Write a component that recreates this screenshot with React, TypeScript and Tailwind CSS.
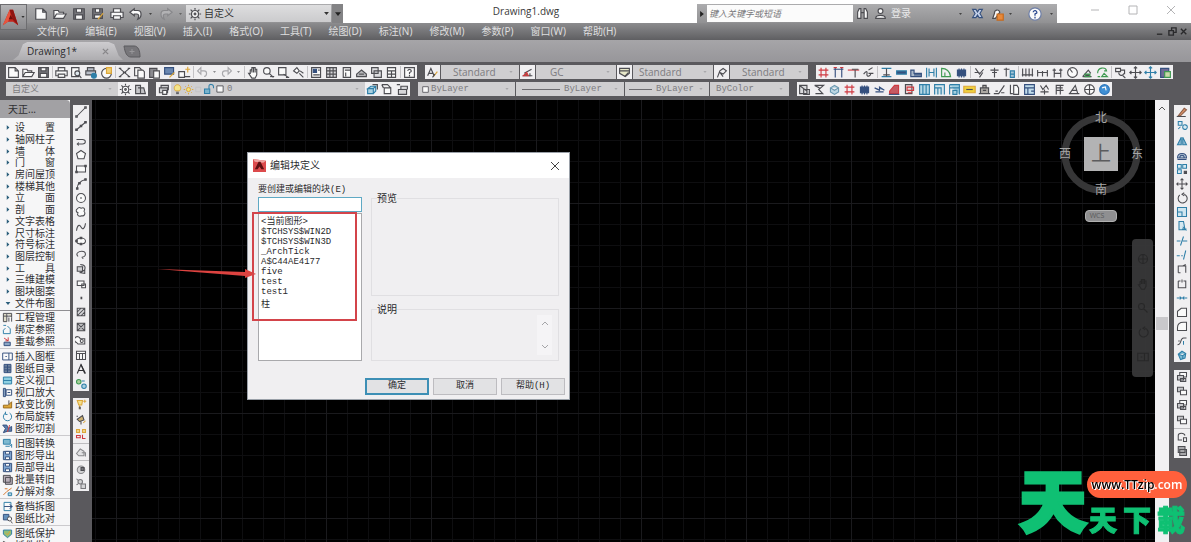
import React from "react";

type Stroke = [d: string, color: string, fill?: string];

const K = "#4d4d52";
const L = "#a9a9ad";
const B = "#2f7fa8";
const N = "#35507e";
const R = "#cf3a40";
const Y = "#dca63a";
const G = "#3f9a52";
const W = "#fafafa";

// All glyphs are drawn on a 16 x 16 grid
const GLYPHS: Record<string, Stroke[]> = {
  new: [["M2 2H10L14 6V14H2ZM10 2V6H14", K, W]],
  open: [["M1 13V4H6L7 6H12V8M1 13L4 8H15L12 13Z", K, W]],
  save: [["M2 2H14V14H2Z", K, "#77777c"], ["M5 2H11V6H5ZM4 9H12V14H4Z", K, W]],
  saveas: [["M2 2H13V13H2Z", K, "#77777c"], ["M5 2H10V6H5ZM4 9H11V13H4Z", K, W], ["M8 14L14 7", Y]],
  print: [["M4 6V2H12V6M1 6H15V12H1Z", K, W], ["M4 10H12V14H4Z", K, W]],
  preview: [["M2 2H11V13H2Z", K, W], ["M6 9A3 3 0 1 0 12 9A3 3 0 1 0 6 9M11 11L14 15", K, "#dfe8ee"]],
  publish: [["M3 6V2H11V6M1 6H13V11H1Z", K, "#b9bec8"], ["M8 12A3 3 0 1 0 14 12A3 3 0 1 0 8 12", B, B]],
  globe: [["M2 9A6 6 0 1 0 14 9A6 6 0 1 0 2 9", K, W], ["M8 9V2H14V9Z", Y, "#f0d077"]],
  cut: [["M2 3L14 13M14 3L2 13", K], ["M6 8H10", K], ["M1 3H4M12 3H15M1 13H4M12 13H15", K]],
  copy: [["M2 2H8L10 4V12H2Z", K, W], ["M6 5H12L14 7V15H6Z", K, W]],
  paste: [["M2 3H11V14H2Z", K, "#8b8b90"], ["M7 6H14V15H7Z", K, W]],
  match: [["M2 2H13V10H2Z", N, "#6a87b0"], ["M8 14L14 8", Y]],
  block: [["M1 7H8V14H1ZM8 13H15", K, W], ["M9 4H15M12 1V8", Y]],
  undo: [["M2 6L6 2V10ZM6 6H10C14 6 14 12 10 13", L]],
  redo: [["M14 6L10 2V10ZM10 6H6C2 6 2 12 6 13", L]],
  undoW: [["M1 6L6 2V4H10C15 4 15 12 10 14C12 10 11 8 9 8H6V10Z", K, W]],
  redoG: [["M15 6L10 2V4H6C1 4 1 12 6 14C4 10 5 8 7 8H10V10Z", "#88888b", "#b2b2b4"]],
  hand: [["M4 9V5L6 4V8V2H8V8V2H10V8V4H12V11L10 15H6L2 9Z", K, W]],
  zoom: [["M2 6A4 4 0 1 0 10 6A4 4 0 1 0 2 6M9 9L14 14", K, W], ["M10 13H15", K]],
  zoomwin: [["M2 2H11V11H2Z", K, W], ["M8 10L14 14M11 14H15", K]],
  zoomprev: [["M2 6L6 2L9 6L6 9Z", K, W], ["M9 9L14 14M10 6L14 9", K]],
  props: [["M2 2H13V14H2Z", K, W], ["M4 4H8V8H4Z", N, N], ["M10 5H12M4 11H12", K]],
  grid: [["M2 2H14V14H2Z", K, "#d6d6d9"], ["M2 6H14M2 10H14M6 2V14M10 2V14", K]],
  toolpal: [["M4 2H13V14H4Z", K, W], ["M6 5H13M7 8V13", K]],
  sheet: [["M2 10L8 5L14 10V13H2Z", K, "#b5b5b8"], ["M5 10H11", K]],
  markup: [["M2 2H10V9H2ZM5 6H14V14H5Z", K, "#dddde0"]],
  calc: [["M3 2H13V14H3ZM3 6H13M8 6V14M3 10H13", K, W]],
  help: [["M2 2H14V14H2Z", K, W], ["M6 6C6 3 11 4 10 7L8 8V10M8 11V13", K]],
  textA: [["M2 12L6 3L10 12M4 9H9", K], ["M9 13L14 7", Y], ["M8 14L11 10", K]],
  dim: [["M2 12H14M4 9L13 4M11 9V13", K], ["M3 12L7 8L9 12Z", R, "#8a5b45"]],
  table: [["M2 3H14V9L9 13L2 9Z", K, "#e6e6c8"], ["M2 6H14M8 13L13 8", K]],
  mleader: [["M3 14L6 6L10 3L14 6L10 10L6 8M6 8L10 13", K]],
  gear: [["M4 8A4 4 0 1 0 12 8A4 4 0 1 0 4 8", K, W], ["M7 8A1 1 0 1 0 9 8A1 1 0 1 0 7 8M8 1V3M8 13V15M1 8H3M13 8H15M3 3L5 5M11 11L13 13M3 13L5 11M11 5L13 3", K]],
  flyout: [["M2 3H8V13H2ZM5 6H12L14 13H6", K, "#c4c4c7"]],
  layers: [["M3 6H13V12H3ZM5 6V3H14V9", K, "#cccccf"], ["M7 14V9H12V14Z", K, W]],
  bulb: [["M5 10C1 5 5 1 8 1C11 1 15 5 11 10Z", Y, "#f4e58a"], ["M6 12H10M6 14H10", K]],
  sun: [["M5 8A3 3 0 1 0 11 8A3 3 0 1 0 5 8M8 1V3M8 13V15M1 8H3M13 8H15M3 3L4 4M12 12L13 13M3 13L4 12M12 4L13 3", Y, "#f3e27a"]],
  faint: [["M3 4H12V12H3Z", "#c0c0c2"]],
  lock: [["M2 8H9V14H2Z", B, "#78b2cc"], ["M8 8V4C8 1 14 1 14 5V7", B]],
  square: [["M3 3H13V13H3Z", K, W]],
  cubes: [["M2 7L6 4H12L9 7ZM2 7V13H9V7M9 13L12 10V4", B, "#a9cfdf"], ["M8 2H14V8", K]],
  layback: [["M4 6H12V13H4ZM1 2H8L12 6M1 2L3 6", K, W]],
  laystate: [["M3 8H13V14H3ZM6 8V4H14V8M1 2H5", K, "#d5d5d8"]],
  hash: [["M5 2V14M11 2V14M2 5H14M2 11H14", R]],
  axis: [["M2 4H14M4 2V14M12 2V14", N], ["M2 2H6M10 2H14", R]],
  wallaxis: [["M1 5H15", R], ["M6 4H14M10 5V14", K]],
  edit: [["M2 10C5 6 7 6 6 10C6 14 10 13 11 9M8 5L13 2M8 9H14", K]],
  ibeam: [["M2 3H14M2 13H14", B], ["M8 3V13M4 11H12", K]],
  bar: [["M2 6H14V10H2Z", B, N]],
  stairs: [["M1 13V5H5V9H14V13ZM5 11H14", N, "#a9b8c8"]],
  doorw: [["M2 2V14M14 2V14M5 3V13M11 3V13M5 8H11", B]],
  arcdoor: [["M2 13V3C8 3 12 7 13 13ZM6 13V8", G]],
  column: [["M3 5H13V12H3Z", N, N], ["M5 3V14M11 3V14M8 3V14", N]],
  pens: [["M3 3L8 10L13 4M2 8H8M8 14L12 8", K]],
  mark: [["M3 5H13M8 2V14M5 8H11", K]],
  markb: [["M1 4H8M4 2V13", K], ["M9 6H14V14H9ZM9 10H14", B, "#a8c6d8"]],
  dims: [["M2 3V13M6 3V13M10 3V13M14 3V13M1 11H15", K]],
  dimh: [["M2 5V13M14 5V13M2 8H14M8 6V13", K]],
  dimx: [["M2 5H6M10 5H14M4 3V14M12 3V14M4 9H12", K]],
  radius: [["M2 8A6 6 0 1 0 14 8A6 6 0 1 0 2 8M8 8L5 4", K, W]],
  angle: [["M2 13L9 5L12 9M2 13H13", K], ["M5 10H11V13H5Z", G, K]],
  refresh: [["M2 9C2 1 12 1 13 6L10 6M14 13L10 9L7 13ZM2 13H5", G]],
  find: [["M2 3H8V7H2ZM8 5H13V10M6 8A3 3 0 1 0 12 9", K], ["M11 12L14 15", K]],
  move: [["M8 1V15M1 8H15M6 3L8 1L10 3M6 13L8 15L10 13M3 6L1 8L3 10M13 6L15 8L13 10", K]],
  moveB: [["M8 1V15M1 8H15M6 3L8 1L10 3M6 13L8 15L10 13M3 6L1 8L3 10M13 6L15 8L13 10", B]],
  clip: [["M2 3H12V14H2Z", N, "#6f6a96"], ["M7 7H14V14H7Z", G, "#c9d8a8"]],
  pagebox: [["M2 3H11V13H2ZM2 3L11 10M7 8H14V14H7Z", K, "#dadadd"]],
  sigma: [["M2 3H13L7 8L12 13H3M2 3L8 6", K]],
  cloud: [["M3 6L8 3L13 6V11L8 14L3 11ZM3 6L8 9L13 6", "#6b98b0", "#bcd6e2"]],
  pump: [["M2 6L8 9V5L14 9M3 11H13", N, "#6b86a8"]],
  shoe: [["M2 13V10L8 3H13V13Z", R, "#c55a62"], ["M1 14H14", N]],
  redpage: [["M3 2H11V13H3Z", K, "#e9d5d7"], ["M5 5H13V9H5ZM6 12H11", R]],
  curtain: [["M2 2H14V14H2ZM6 2V14M10 2V14", B, "#b4d6e4"]],
  gate: [["M2 14V2H14V14M6 14V6H10V14M2 6H6", B, "#d5e5ec"]],
  window: [["M2 2H14V14M2 2V14M2 6H14M6 9H11V14H6Z", B, "#a3cfe0"]],
  ruler: [["M1 4H15V12H1Z", Y, "#f0cf3c"], ["M4 8H12", K]],
  robot: [["M3 6H13V13H3ZM6 6V3H10V6M6 9H10M1 13H15", K, "#ada9a4"]],
  slope: [["M1 13H7L14 3M3 10H6M10 12H14", K]],
  brace: [["M3 2V13H6M7 3H11L13 6V14H7Z", K, W]],
  calb: [["M2 2H14V14H2Z", N, "#c1dcea"], ["M2 6H14M6 6V14M10 10H14", N]],
  trees: [["M3 3L6 8L10 3L13 8M8 8V14M3 11H13", K]],
  flag: [["M4 14V3H13M4 6H12M4 9H13M9 3V14", K]],
  alpha: [["M2 13L9 3L12 13M5 9H11M1 13H14", K]],
  target: [["M2 8A6 6 0 1 0 14 8A6 6 0 1 0 2 8M8 2V14M2 8H14", K, W]],
  earth: [["M2 8A6 6 0 1 0 14 8A6 6 0 1 0 2 8", "#2f78bc", "#3f8fd4"], ["M5 6L9 5L10 9", W]],
  line: [["M2 14L14 2", K], ["M1 13H3V15H1ZM13 1H15V3H13Z", K]],
  xline: [["M2 13L14 3", K], ["M1 12H3V14H1ZM13 2H15V4H13ZM7 7H9V9H7Z", K, K]],
  pline: [["M2 6H10C15 6 15 12 10 12H3M5 10L3 12L5 14", K]],
  polygon: [["M8 2L14 6L12 13H4L2 6Z", K, W]],
  rect: [["M2 4H14V12H2Z", K, W], ["M1 11H3V13H1ZM13 3H15V5H13Z", K, K]],
  arc: [["M3 14C3 8 7 4 14 2", K], ["M2 13H4V15H2ZM13 1H15V3H13ZM5 6H7V8H5Z", K, K]],
  circle: [["M2 8A6 6 0 1 0 14 8A6 6 0 1 0 2 8M7 8H9M8 7V9", K, W]],
  revcloud: [["M3 4C5 1 7 2 8 3C12 1 14 4 12 7C15 10 12 14 9 13C5 15 2 12 4 9C1 8 1 5 3 4", K, W]],
  spline: [["M2 13C3 5 6 4 8 8C10 12 13 11 14 3", K]],
  ellipse: [["M2 8A6 4 0 1 0 14 8A6 4 0 1 0 2 8", K, W], ["M7 3H9V5H7ZM7 11H9V13H7ZM1 7H3V9H1Z", K, K]],
  ellarc: [["M4 10C0 6 5 3 9 3C15 3 16 10 9 11M9 11L11 13", K]],
  insblock: [["M3 5H10V11H3ZM7 2C14 2 14 6 13 9M7 13L13 9V14Z", K, "#d1d1d4"]],
  mkblock: [["M3 4H12V10H3ZM9 8H14V13H9Z", K, W]],
  point: [["M8 7H9V9H8Z", K, K]],
  hatch: [["M3 3H13V13H3ZM3 8L8 3M3 13L13 3M8 13L13 8", K, "#d5d5d8"]],
  gradient: [["M3 3H13V13H3ZM3 3L13 13M13 3L3 13", K, "#bcbcbf"]],
  region: [["M2 10A4 4 0 1 1 7 5H13V12H4Z", K, W], ["M7 8A2 2 0 1 0 11 8A2 2 0 1 0 7 8", K]],
  tabl: [["M2 3H14V14H2ZM2 6H14M6 6V14M10 6V14", K, W]],
  mtext: [["M3 14L8 2L13 14M5 10H11", "#2f2f33"], ["M8 2L14 14", "#2f2f33"]],
  addsel: [["M2 5A3 3 0 1 0 8 5A3 3 0 1 0 2 5", G, "#a8cf9a"], ["M9 11A3 3 0 1 0 15 11A3 3 0 1 0 9 11M9 4H13", B, "#a9cfdf"]],
  lampy: [["M3 2H10L9 8H5ZM6 9V13", Y, "#f4e08a"], ["M11 3H15M13 1V5", Y], ["M5 11H8M5 13H8", K]],
  lampk: [["M3 7L10 2L12 8L6 10ZM8 10V14M2 3H4", K, "#cdb070"], ["M11 12L14 9", Y]],
  nodes: [["M2 2H6V6H2ZM10 2H14V6H10Z", Y, "#f0d48a"], ["M2 10H7V13H2ZM10 9V14H14", R]],
  cloudg: [["M2 10L7 4L12 7V13H5ZM9 9H14V14", "#88888c", "#e2e2e4"]],
  ball: [["M3 9A5 5 0 1 0 13 9A5 5 0 1 0 3 9", "#88888c", "#d4d4d6"], ["M8 6H12V10H8Z", K, "#77777c"]],
  suns: [["M4 5A3 3 0 1 0 10 5A3 3 0 1 0 4 5M8 8H14V14H8ZM2 9L4 8M2 1L4 3", "#77777b", "#d4d4d6"]],
  erase: [["M3 13L11 3L14 5L6 13Z", "#8a5b45", "#d68f66"], ["M1 14H13", K]],
  copyo: [["M3 2H8V7H3ZM9 9A3 3 0 1 0 15 10A3 3 0 1 0 9 9M3 12L6 9", B, "#d8eaf2"]],
  mirror: [["M7 3V13H2ZM9 3V13H14Z", B, "#8fb9d2"]],
  offset: [["M2 12C2 4 14 4 14 12ZM5 12C5 7 11 7 11 12M2 14H14", N, "#b5c7d8"]],
  array: [["M2 2H7V7H2ZM9 2H14V7H9ZM2 9H7V14H2Z", B, "#d8eaf2"], ["M11 11H14V14H11Z", K, K]],
  rotate: [["M5 4A6 6 0 1 0 11 3M11 1L8 3L11 5", K]],
  scale: [["M2 2H14V14H2ZM2 8H8V14", B, "#cfe6f0"]],
  stretch: [["M4 2H10L12 13H4ZM9 9L14 14M8 12H14", B, "#d5e8f1"]],
  trim: [["M1 8H6M9 8H15M6 14L10 2", B]],
  extend: [["M1 9H5M7 9H9M10 14L13 2", B]],
  brk: [["M3 13V4H13V13M9 4L13 2M3 13H6", K]],
  brk2: [["M3 4H6M10 4H13V13H3V4M8 2V6", K]],
  join: [["M1 8H15M5 6L7 8L5 10M11 6L9 8L11 10", B]],
  chamfer: [["M2 14V7L7 3H14V14Z", K, W]],
  fillet: [["M2 14V10C2 5 5 3 10 3H14V14Z", K, W]],
  blend: [["M2 13C8 13 5 4 10 4H14M3 8H5", K], ["M10 8V13", B]],
  explode: [["M3 7L8 3L13 6L12 12L6 14ZM3 7L9 9L13 6M9 9V13", B, "#7dbad3"]],
  front: [["M5 2H14V8H5Z", K, W], ["M2 6H10V12H2ZM6 10H13V14H6Z", K, "#c7c7ca"]],
  back: [["M2 3H10V9H2Z", K, "#c7c7ca"], ["M6 7H14V13H6Z", K, W]],
  cyc: [["M3 6C3 2 11 2 12 6M3 6V12H8M10 9H14V14H10Z", K]],
  stack: [["M3 2H12V10H3ZM5 6H14V14H5Z", K, "#a8a8ab"]],
  project: [["M2 2H7V14H2ZM7 2H14V8M10 8V14M14 8V14M2 6H14", K, "#e0ddc9"]],
  bind: [["M2 9V14H12V7L8 3M2 9L5 6M2 2H6", B]],
  reload: [["M3 9H12V14H3Z", N, "#8aa6c5"], ["M3 3L9 7M9 2V7H5", R]],
  frame: [["M1 3H15V13H1ZM5 8H7M10 3V13", N, W]],
  catalog: [["M3 2H13V14H3Z", N, "#70839c"], ["M3 6H13M3 10H13M8 2V14", N]],
  view: [["M2 3H14V13H2Z", B, "#8fd0e2"], ["M2 8H14", B]],
  zoomv: [["M2 2H5V14H2Z", N, "#8aa6c5"], ["M6 4H14V12H6ZM8 8H12", N, W]],
  ratio: [["M2 9H9L14 4V13H2Z", "#9b6b1b", Y], ["M10 2V8", K]],
  turn: [["M11 3A6 6 0 1 1 5 3M5 1V5H8", B]],
  slice: [["M1 3H7L9 8L14 5V12H8L2 14L5 8Z", N, "#5b7fae"], ["M11 3L8 13", R]],
  convert: [["M2 2H12V9H2Z", B, "#7fb9d0"], ["M5 12H11L14 9V14", B]],
  disk: [["M2 2H14V14H2Z", N, "#7fa6d2"], ["M5 2H11V6H5ZM5 10H11V14H5Z", N, W]],
  batch: [["M2 2H12V12H2ZM5 5H15V15H5Z", K, "#b9aeb8"]],
  split: [["M2 13L7 8L14 3M8 4H4", "#d2762e"], ["M9 10H14V14H9Z", B, "#b4d6e4"]],
  archive: [["M3 2H13V14H3Z", B, W], ["M3 8H15M11 5L15 8L11 11", N]],
  compare: [["M2 2H10V10H2Z", N, "#6490bb"], ["M8 8A3 3 0 1 0 14 9A3 3 0 1 0 8 8M13 12L15 15", K, W]],
  protect: [["M2 3H14V9L8 14L2 9Z", B, "#8fbf7a"], ["M5 7L8 10L12 4", Y]],
  plugin: [["M2 2L14 8L8 9L6 14Z", K, "#8a8a55"]],
  binoc: [["M2 14V6L4 2H6V14ZM10 14V2H12L14 6V14ZM6 7H10", K, W]],
  person: [["M5 5A3 3 0 1 0 11 5A3 3 0 1 0 5 5M2 14C2 9 14 9 14 14Z", K, W]],
  exchange: [["M2 3H6L8 6L10 3H14L11 8L14 13H10L8 10L6 13H2L5 8Z", N, "#c5d1e8"]],
  a360: [["M4 7A3 3 0 1 1 10 6L5 13H2Z", K, W], ["M7 8H14V15H7Z", "#c56a1d", "#e8893a"]],
  qmark: [["M1 8A7 7 0 1 0 15 8A7 7 0 1 0 1 8", "#6e7fa8", W], ["M6 6C6 3 11 4 10 7L8 8V10M8 11V13", "#27458f"]],
};

const Glyph = ({ name, className = "size-[13px]" }: { name: string; className?: string }) => (
  <svg viewBox="0 0 16 16" className={`${className} shrink-0`} strokeWidth={1.4} aria-hidden="true">
    {GLYPHS[name].map(([d, color, fill], i) => (
      <path key={i} d={d} stroke={color} fill={fill ?? "none"} />
    ))}
  </svg>
);

const Caret = ({ className }: { className: string }) => (
  <svg viewBox="0 0 8 5" className={`pointer-events-none shrink-0 ${className}`} aria-hidden="true">
    <path d="M0 0H8L4 5Z" fill="currentColor" />
  </svg>
);

// "|" is a separator and "." the small arrow beside undo / redo
function ToolStrip({ items }: { items: string }) {
  return (
    <div className="flex h-full items-center bg-[#f0eff1]">
      {items.split(" ").map((name, i) => {
        if (name === "|") return <span key={i} className="mx-px h-3 w-px bg-[#c3c2c5]" />;
        if (name === ".")
          return (
            <span key={i} className="flex w-[9px] justify-center">
              <Caret className="h-[2px] w-[3px] text-[#8d8d90]" />
            </span>
          );
        return (
          <button key={i} type="button" aria-label={name} className="flex h-full w-[15px] items-center justify-center">
            <Glyph name={name} />
          </button>
        );
      })}
    </div>
  );
}

function VerticalStrip({ items, className }: { items: string; className: string }) {
  return (
    <div className={`flex w-full flex-col bg-[#f0eff1] ${className}`}>
      {items.split(" ").map((name, i) =>
        name === "|" ? (
          <span key={i} className="my-px h-px bg-[#bdbcbf]" />
        ) : (
          <button key={i} type="button" aria-label={name} className="flex min-h-0 flex-1 items-center justify-center">
            <Glyph name={name} className="size-[12px]" />
          </button>
        )
      )}
    </div>
  );
}

function Combo({ label, value, className, children }: { label: string; value: string; className: string; children?: React.ReactNode }) {
  return (
    <label className={`flex h-full items-center bg-[#cfced0] pr-1.5 text-[#7d7c80] ${className}`}>
      {children}
      <select aria-label={label} className="h-full min-w-0 flex-1 appearance-none bg-transparent leading-[14px] outline-none">
        <option>{value}</option>
      </select>
      <Caret className="h-[2px] w-1 text-[#aaa9ac]" />
    </label>
  );
}

const MENUS = ["文件(F)", "编辑(E)", "视图(V)", "插入(I)", "格式(O)", "工具(T)", "绘图(D)", "标注(N)", "修改(M)", "参数(P)", "窗口(W)", "帮助(H)"];

const CATEGORIES = [
  "设　　置", "轴网柱子", "墙　　体", "门　　窗", "房间屋顶", "楼梯其他", "立　　面", "剖　　面",
  "文字表格", "尺寸标注", "符号标注", "图层控制", "工　　具", "三维建模", "图块图案", "文件布图",
];

const COMMANDS: [string, string][][] = [
  [["project", "工程管理"], ["bind", "绑定参照"], ["reload", "重载参照"]],
  [
    ["frame", "插入图框"], ["catalog", "图纸目录"], ["view", "定义视口"], ["zoomv", "视口放大"],
    ["ratio", "改变比例"], ["turn", "布局旋转"], ["slice", "图形切割"],
  ],
  [["convert", "旧图转换"], ["disk", "图形导出"], ["disk", "局部导出"], ["batch", "批量转旧"], ["split", "分解对象"]],
  [["archive", "备档拆图"], ["compare", "图纸比对"]],
  [["protect", "图纸保护"], ["plugin", "插件发布"]],
];

const BLOCKS = ["<当前图形>", "$TCHSYS$WIN2D", "$TCHSYS$WIN3D", "_ArchTick", "A$C44AE4177", "five", "test", "test1", "柱"];

const AutocadLogo = ({ className }: { className: string }) => (
  <svg viewBox="0 0 20 20" className={className} aria-hidden="true">
    <path d="M1 19L9 1H13L19 19L13 15H7Z" fill="#c4261d" />
    <path d="M9 1L13 1L19 19L13 13Z" fill="#8e1512" />
    <path d="M1 19L9 1L10 9L7 15Z" fill="#e8553f" />
    <path d="M8 12L10 7L13 12Z" fill="#6e0f0d" />
  </svg>
);

const DialogLogo = () => (
  <svg viewBox="0 0 14 14" className="size-[13px]" aria-hidden="true">
    <path d="M0 0L14 2V14H0Z" fill="#dc4a4c" />
    <path d="M0 0L14 2L11 4L2 3Z" fill="#f0a5a2" />
    <path d="M2 11L6 3H8L12 11H9L7 8L5 11Z" fill="#5e0f12" />
  </svg>
);

function TitleBar() {
  return (
    <header className="flex h-[23px] shrink-0 items-end bg-white">
      <div className="flex h-[19px] items-center bg-gradient-to-b from-[#acacae] to-[#919193] pl-[31px]">
        {["new", "open", "save", "saveas", "print", "undoW"].map((name) => (
          <button key={name} type="button" aria-label={name} className="flex w-[19px] justify-center">
            <Glyph name={name} className="size-[14px]" />
          </button>
        ))}
        <Caret className="mx-1 h-[2px] w-[3px] text-[#444]" />
        <button type="button" aria-label="redo" className="flex w-[19px] justify-center">
          <Glyph name="redoG" className="size-[14px]" />
        </button>
        <Caret className="mx-1 h-[2px] w-[3px] text-[#666]" />
        <label className="flex h-[17px] w-[145px] items-center gap-0.5 bg-gradient-to-b from-[#dededf] to-[#cbcbcd] px-0.5 text-[#333]">
          <Glyph name="gear" className="size-[14px]" />
          <select aria-label="工作空间" className="h-full min-w-0 flex-1 appearance-none bg-transparent text-[10px] outline-none">
            <option>自定义</option>
          </select>
          <Caret className="h-[3px] w-[5px]" />
        </label>
        <button type="button" aria-label="自定义快速访问工具栏" className="ml-px flex h-full w-[11px] items-center justify-center bg-[#838385] text-[#222]">
          <Caret className="h-1 w-[6px]" />
        </button>
      </div>
      <h1 className="flex-1 self-stretch pl-3 text-center font-['Open_Sans','Noto_Sans_CJK_SC',sans-serif] text-[10px] leading-[23px] text-[#3a3a3a]">Drawing1.dwg</h1>
      <form className="flex h-[19px] items-center bg-gradient-to-b from-[#acacae] to-[#919193]">
        <button type="button" aria-label="展开" className="flex w-[10px] justify-center text-[#222]">
          <Caret className="h-[4px] w-[6px] -rotate-90" />
        </button>
        <input
          type="search"
          aria-label="搜索"
          placeholder="键入关键字或短语"
          className="h-[17px] w-[146px] bg-[#fbfbfb] px-0.5 text-[9px] italic outline-none placeholder:text-[#77777a]"
        />
        <button type="button" aria-label="搜索" className="flex w-[19px] justify-center"><Glyph name="binoc" /></button>
        <button type="button" className="flex items-center gap-1 pl-0.5 text-[10px] text-[#e9e9ea]">
          <Glyph name="person" />
          登录
        </button>
        <Caret className="ml-12 mr-1.5 h-[2px] w-[3px] text-[#444]" />
        <button type="button" aria-label="Exchange" className="flex w-[19px] justify-center"><Glyph name="exchange" /></button>
        <button type="button" aria-label="A360" className="flex w-[22px] justify-center"><Glyph name="a360" className="size-[14px]" /></button>
        <Caret className="h-[2px] w-[3px] text-[#444]" />
        <button type="button" aria-label="帮助" className="ml-4 mr-2 flex justify-center"><Glyph name="qmark" className="size-[14px]" /></button>
        <Caret className="mr-1 h-[2px] w-[3px] text-[#444]" />
      </form>
      <div className="flex w-[134px] items-center justify-between self-stretch pb-[3px] pl-[33px] pr-[15px] text-[#b4b4b6]">
        {["M1 5H9", "M1 1H9V9H1Z", "M1 1L9 9M9 1L1 9"].map((d) => (
          <button key={d} type="button" aria-label="窗口">
            <svg viewBox="0 0 10 10" className="size-[10px]"><path d={d} fill="none" stroke="currentColor" /></svg>
          </button>
        ))}
      </div>
    </header>
  );
}

function MenuBar() {
  return (
    <nav className="flex h-[17px] shrink-0 items-center gap-[17px] bg-gradient-to-b from-[#8c8c8e] to-[#5f5f62] pl-[37px] pr-0.5 text-[10px] text-[#dededf]">
      {MENUS.map((menu) => (
        <a key={menu} href="#" className="whitespace-nowrap leading-[17px]">{menu}</a>
      ))}
      <div className="ml-auto flex gap-[3px] text-[#2a2a2c]">
        {["M1 8H7", "M1 4H6V9H1ZM4 4V1H9V6H6", "M1 2L7 8M7 2L1 8"].map((d) => (
          <button key={d} type="button" aria-label="文档窗口">
            <svg viewBox="0 0 10 10" className="size-[9px]"><path d={d} fill="none" stroke="currentColor" strokeWidth={1.5} /></svg>
          </button>
        ))}
      </div>
    </nav>
  );
}

function DocTabs() {
  return (
    <div className="flex h-[22px] shrink-0 items-end bg-gradient-to-b from-[#a6a5a8] to-[#97969a] pl-[13px] pb-0.5">
      <div className="flex h-[18px] w-[110px] items-center justify-between bg-gradient-to-b from-[#cdcccf] to-[#aeadb0] pl-3.5 pr-3.5 [clip-path:polygon(0_100%,5%_75%,9%_12%,13%_0,87%_0,92%_12%,96%_75%,100%_100%)]">
        <a href="#" className="font-['Open_Sans',sans-serif] text-[10px] leading-[18px] text-[#2c2c2e]">Drawing1*</a>
        <button type="button" aria-label="关闭" className="text-[#88878a]">
          <svg viewBox="0 0 8 8" className="size-[7px]"><path d="M1 1L7 7M7 1L1 7" stroke="currentColor" strokeWidth={1.5} /></svg>
        </button>
      </div>
      <button type="button" aria-label="新图形" className="mb-0.5">
        <svg viewBox="0 0 18 13" className="h-[13px] w-[18px]">
          <path d="M1 1H11C15 1 17 5 17 12H8C4 12 2 8 1 1Z" fill="#77767a" stroke="#5b5a5e" />
          <path d="M9 4V9M6.500 6.500H11.500" stroke="#98979a" />
        </svg>
      </button>
    </div>
  );
}

function Toolbars() {
  return (
    <div className="flex shrink-0 flex-col gap-[3px] bg-[#5a595d] pb-0.5 pl-1.5 pt-[3px]">
      <div className="flex h-[14px] gap-2">
        <ToolStrip items="new open save | print preview publish globe | cut copy paste match block | undo . redo . | hand zoom zoomwin zoomprev | props grid toolpal sheet markup calc | help" />
        <div className="flex gap-px font-['Open_Sans',sans-serif] text-[10px]">
          <ToolStrip items="textA" />
          <Combo label="文字样式" value="Standard" className="w-[78px] pl-3" />
          <ToolStrip items="dim" />
          <Combo label="标注样式" value="GC" className="w-[80px] pl-3.5" />
          <ToolStrip items="table" />
          <Combo label="表格样式" value="Standard" className="w-[80px] pl-1.5" />
          <ToolStrip items="mleader" />
          <Combo label="引线样式" value="Standard" className="w-[78px] pl-3" />
        </div>
        <ToolStrip items="hash axis wallaxis edit | ibeam bar stairs doorw arcdoor column | pens mark markb | dims dimh dimx radius angle refresh | find move moveB clip" />
      </div>
      <div className="flex h-[14px] gap-2">
        <div className="flex">
          <Combo label="工作空间" value="自定义" className="w-[112px] pl-1.5 text-[9px]" />
          <ToolStrip items="gear flyout" />
        </div>
        <div className="flex font-['Liberation_Mono',monospace] text-[9px]">
          <ToolStrip items="layers" />
          <Combo label="图层" value="0" className="w-[194px] pl-px">
            <Glyph name="bulb" className="size-[11px]" />
            <Glyph name="sun" className="size-[11px]" />
            <Glyph name="faint" className="size-[9px]" />
            <Glyph name="lock" className="size-[12px]" />
            <Glyph name="square" className="mr-0.5 size-[10px]" />
          </Combo>
          <ToolStrip items="cubes layback laystate" />
        </div>
        <div className="flex gap-px font-['Liberation_Mono',monospace] text-[9px]">
          <Combo label="颜色" value="ByLayer" className="w-[97px] pl-[3px]">
            <Glyph name="square" className="mr-px size-[9px]" />
          </Combo>
          <Combo label="线型" value="ByLayer" className="w-[108px] pl-1.5">
            <span className="mr-1 h-px w-[38px] bg-[#6c6b6f]" />
          </Combo>
          <Combo label="线宽" value="ByLayer" className="w-[84px] pl-1">
            <span className="mr-1 h-px w-[23px] bg-[#6c6b6f]" />
          </Combo>
          <Combo label="打印样式" value="ByColor" className="w-[79px] pl-1.5" />
        </div>
        <ToolStrip items="pagebox sigma cloud hash column pump shoe redpage curtain gate window ruler robot slope brace calb trees flag alpha target earth" />
      </div>
    </div>
  );
}

function Palette() {
  return (
    <aside className="flex w-[70px] shrink-0 flex-col overflow-hidden bg-[#f6f6f7] text-[10px] text-[#303033]">
      <h2 className="h-[18px] shrink-0 rounded-tr bg-[#a2a1a4] pl-2 leading-[18px]">天正...</h2>
      <ul className="mt-1 grid h-[187px] shrink-0 auto-rows-fr">
        {CATEGORIES.map((name, i) => (
          <li key={name} className="flex min-h-0 items-center">
            <a href="#" className="flex items-center whitespace-nowrap leading-[11px]">
              <span className="flex w-[15px] justify-center text-[#2c5f7c]">
                <Caret className={i === CATEGORIES.length - 1 ? "h-[3px] w-[6px]" : "h-[3px] w-[6px] -rotate-90"} />
              </span>
              {name}
            </a>
          </li>
        ))}
      </ul>
      <div className="mt-px border-t border-[#8f8e92]">
        {COMMANDS.map((group, i) => (
          <ul key={i} className={i === 0 ? "" : "mt-px border-t border-[#cbcacd] pt-px"}>
            {group.map(([icon, name]) => (
              <li key={name}>
                <a href="#" className="flex h-[12px] items-center gap-[2px] whitespace-nowrap pl-0.5">
                  <Glyph name={icon} className="size-[11px]" />
                  {name}
                </a>
              </li>
            ))}
          </ul>
        ))}
      </div>
    </aside>
  );
}

function BlockDialog() {
  return (
    <section role="dialog" aria-label="编辑块定义" className="absolute left-[155px] top-[52px] w-[323px] border border-[#9aa0a8] bg-[#f0eff1] text-[10px] text-[#2a2a2c]">
      <div className="flex h-[25px] items-center gap-1 bg-white pl-[5px] pr-[9px]">
        <DialogLogo />
        <h2 className="flex-1">编辑块定义</h2>
        <button type="button" aria-label="关闭">
          <svg viewBox="0 0 10 10" className="size-[10px]"><path d="M1 1L9 9M9 1L1 9" stroke="#444" /></svg>
        </button>
      </div>
      <div className="flex gap-[9px] px-[10px]">
        <div className="flex w-[104px] flex-col pt-1.5">
          <label htmlFor="block-name" className="whitespace-nowrap font-['Liberation_Mono','Noto_Sans_CJK_SC',monospace] text-[9px] leading-[13px]">
            要创建或编辑的块(E)
          </label>
          <input id="block-name" type="text" className="h-[15px] w-full border border-[#5fa9c4] bg-white px-0.5 outline-none" />
          <select
            size={9}
            aria-label="块列表"
            className="mt-px h-[148px] w-full overflow-hidden border border-[#a9a9ac] bg-white font-['Liberation_Mono','Noto_Sans_CJK_SC',monospace] text-[9px] outline-none"
          >
            {BLOCKS.map((name) => (
              <option
                key={name}
                className={
                  /[^\x00-\x7f]/.test(name)
                    ? "h-[13px] min-h-0 p-0 pl-0.5 leading-[13px]"
                    : "h-[10px] min-h-0 p-0 pl-0.5 leading-[10px]"
                }
              >
                {name}
              </option>
            ))}
          </select>
        </div>
        <div className="flex-1 pt-3.5">
          <fieldset className="h-[104px] border border-[#e0dfe2]">
            <legend className="ml-[5px] leading-3">预览</legend>
          </fieldset>
          <fieldset className="mt-[7px] h-[58px] border border-[#e0dfe2]">
            <legend className="ml-[5px] leading-3">说明</legend>
            <div className="flex h-[40px] pr-1.5">
              <textarea aria-label="说明" className="flex-1 resize-none bg-transparent outline-none" />
              <div className="flex w-[15px] flex-col items-center justify-between bg-[#f5f4f6] py-1.5">
                <svg viewBox="0 0 8 5" className="h-[5px] w-2"><path d="M1 4L4 1L7 4" fill="none" stroke="#a5a5a8" /></svg>
                <svg viewBox="0 0 8 5" className="h-[5px] w-2"><path d="M1 1L4 4L7 1" fill="none" stroke="#a5a5a8" /></svg>
              </div>
            </div>
          </fieldset>
        </div>
      </div>
      <div className="mt-[17px] flex justify-end gap-1 pb-1 pr-1 font-['Liberation_Mono','Noto_Sans_CJK_SC',monospace] text-[9px]">
        <button type="button" className="h-[17px] w-[64px] border-2 border-[#3d8fb5] bg-[#e2e2e4] leading-[13px]">确定</button>
        <button type="button" className="h-[17px] w-[64px] border border-[#bdbcc0] bg-[#e2e2e4] leading-[15px]">取消</button>
        <button type="button" className="h-[17px] w-[64px] border border-[#bdbcc0] bg-[#e2e2e4] leading-[15px]">帮助(H)</button>
      </div>
    </section>
  );
}

function ViewCube() {
  return (
    <div className="absolute right-3 top-2.5 flex w-[84px] flex-col items-center text-[12px] leading-4 text-[#a6a6a6]">
      <svg viewBox="0 0 84 88" className="absolute inset-x-0 top-0 h-[88px] w-[84px]" aria-hidden="true">
        <circle cx="42" cy="44" r="36" fill="none" stroke="#363637" strokeWidth={7} />
      </svg>
      <span className="relative">北</span>
      <div className="relative my-[11px] flex w-full items-center justify-between">
        <span>西</span>
        <button type="button" className="size-[34px] bg-[#b3b3b4] text-[20px] leading-[34px] text-[#5c5c5e]">上</button>
        <span>东</span>
      </div>
      <span className="relative">南</span>
      <button type="button" className="mt-3 h-3 w-[32px] rounded-sm border border-[#b0b0b0] bg-[#8f8f91] pr-2 text-[7px] leading-[10px] text-[#5e5e60]">WCS</button>
    </div>
  );
}

function NavBar() {
  return (
    <div className="absolute right-0.5 top-[139px] flex h-[138px] w-[21px] flex-col items-center justify-around rounded-sm bg-[#3b3b3c] py-2 opacity-90">
      {["target", "hand", "zoom", "rotate", "frame"].map((name) => (
        <button key={name} type="button" aria-label={name} className="opacity-25">
          <svg viewBox="0 0 16 16" className="size-[12px]">
            <path d={GLYPHS[name][0][0]} fill="none" stroke="#000" strokeWidth={1.5} />
          </svg>
        </button>
      ))}
    </div>
  );
}

function Canvas() {
  return (
    <main className="relative min-w-0 flex-1 overflow-hidden bg-black">
      <div className="absolute inset-0 bg-[linear-gradient(to_right,#0e0e10_1px,transparent_1px),linear-gradient(to_bottom,#0e0e10_1px,transparent_1px)] bg-[position:3px_19px] bg-[size:21px_21px]" />
      <div className="absolute inset-0 bg-[linear-gradient(to_right,#1a1a1d_1px,transparent_1px),linear-gradient(to_bottom,#1a1a1d_1px,transparent_1px)] bg-[position:24px_103px] bg-[size:105px_105px]" />
      <BlockDialog />
      <svg viewBox="0 0 100 14" className="absolute left-[65px] top-[166px] h-[14px] w-[100px]" aria-hidden="true">
        <path d="M0 3L88 6V3L99 8L88 12V10Z" fill="#dd4340" />
      </svg>
      <div className="pointer-events-none absolute left-[160px] top-[112px] h-[109px] w-[105px] border-2 border-[#d3444a]" />
      <ViewCube />
      <NavBar />
    </main>
  );
}

function Watermark() {
  return (
    <div className="fixed bottom-[7px] right-1 flex items-start font-['Noto_Sans_CJK_TC',sans-serif] font-black text-[#0fc073]">
      <span className="text-[68px] leading-[54px] [-webkit-text-stroke:3px_#0fc073]">天</span>
      <div className="flex flex-col items-center gap-[5px]">
        <a href="#" className="h-[27px] w-[100px] rounded-full bg-[#ff603c] text-center font-['Open_Sans',sans-serif] text-[12px] font-semibold leading-[28px] text-white">
          <span className="text-black [text-shadow:1px_1px_0_#fff,-1px_0_0_#fff]">www.TTzip</span>.com
        </a>
        <span className="flex w-[96px] justify-between text-[28px] leading-[32px] [-webkit-text-stroke:1px_#0fc073]">
          <span>天</span>
          <span>下</span>
          <span>載</span>
        </span>
      </div>
    </div>
  );
}

export default function App() {
  return (
    <div className="relative flex h-screen flex-col overflow-hidden bg-[#5a595d] font-['Noto_Sans','Noto_Sans_CJK_SC',sans-serif]">
      <TitleBar />
      <MenuBar />
      <button type="button" aria-label="应用程序菜单" className="absolute left-0 top-1 flex h-[26px] w-[27px] items-center justify-center gap-0.5 border border-[#6d6d70] bg-gradient-to-b from-[#b5b5b7] to-[#89898c] text-[#333]">
        <AutocadLogo className="size-[17px]" />
        <Caret className="h-[2px] w-1" />
      </button>
      <DocTabs />
      <Toolbars />
      <div className="flex min-h-0 flex-1 pt-0.5">
        <Palette />
        <div className="flex w-[22px] shrink-0 flex-col gap-[7px] px-[3px] pt-[5px]">
          <VerticalStrip
            className="h-[286px]"
            items="line xline pline polygon rect arc circle revcloud spline ellipse ellarc insblock mkblock point hatch gradient region tabl mtext addsel"
          />
          <VerticalStrip className="h-[93px]" items="lampy lampk nodes | cloudg | ball suns" />
        </div>
        <Canvas />
        <div className="flex w-[14px] shrink-0 flex-col items-center bg-[#f1f0f2] pt-1.5">
          <svg viewBox="0 0 8 5" className="h-[5px] w-2"><path d="M1 4L4 1L7 4" fill="none" stroke="#555" /></svg>
          <span className="mt-[206px] h-[13px] w-3 bg-[#c9c8cb]" />
        </div>
        <div className="flex w-[22px] shrink-0 flex-col gap-2 pl-[5px] pr-px pt-[5px]">
          <VerticalStrip
            className="h-[257px]"
            items="erase copyo mirror offset array move rotate scale stretch trim extend brk brk2 join chamfer fillet blend explode"
          />
          <VerticalStrip className="h-[88px]" items="front back front back | cyc stack" />
        </div>
      </div>
      <Watermark />
    </div>
  );
}
